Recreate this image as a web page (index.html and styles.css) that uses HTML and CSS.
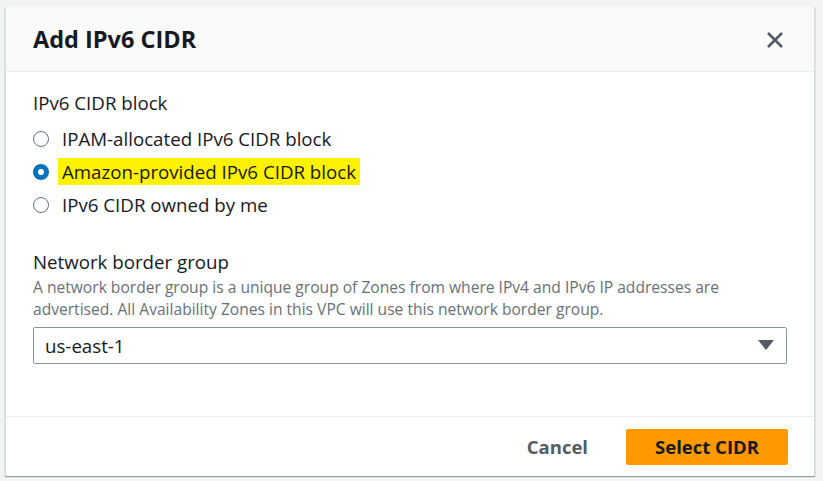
FILE: index.html
```html
<!DOCTYPE html>
<html lang="en">
<head>
<meta charset="utf-8">
<title>Add IPv6 CIDR</title>
<link rel="stylesheet" href="styles.css">
</head>
<body>
<div class="backdrop">
  <div class="modal">
    <div class="modal-header">
      <h2 class="title">Add IPv6 CIDR</h2>
      <button class="close" aria-label="Close">
        <svg width="18" height="18" viewBox="0 0 18 18"><path d="M2 2L16 16M16 2L2 16" stroke="#545b64" stroke-width="2.6" fill="none"/></svg>
      </button>
    </div>
    <div class="modal-body">
      <div class="field-label">IPv6 CIDR block</div>
      <div class="radios">
        <label class="radio"><span class="dot"></span><span class="radio-text">IPAM-allocated IPv6 CIDR block</span></label>
        <label class="radio"><span class="dot checked"></span><span class="radio-text highlight">Amazon-provided IPv6 CIDR block</span></label>
        <label class="radio"><span class="dot"></span><span class="radio-text">IPv6 CIDR owned by me</span></label>
      </div>
      <div class="field group">
        <div class="field-label">Network border group</div>
        <div class="desc">A network border group is a unique group of Zones from where IPv4 and IPv6 IP addresses are advertised. All Availability Zones in this VPC will use this network border group.</div>
        <div class="select">
          <span>us-east-1</span>
          <svg width="16" height="11" viewBox="0 0 16 11"><path d="M0 0H16L8 10Z" fill="#545b64"/></svg>
        </div>
      </div>
    </div>
    <div class="modal-footer">
      <button class="btn-link">Cancel</button>
      <button class="btn-primary">Select CIDR</button>
    </div>
  </div>
</div>
</body>
</html>
```
FILE: styles.css
```css
html, body {
  margin: 0;
  padding: 0;
  background: #f2f3f3;
  font-family: "Open Sans", "Noto Sans", sans-serif;
  color: #16191f;
}
.backdrop {
  width: 823px;
  height: 481px;
  padding: 7px 0 0 5px;
  box-sizing: border-box;
}
.modal {
  width: 810px;
  height: 469px;
  background: #fff;
  border-left: 1px solid #d5dbdb;
  border-right: 1px solid #d5dbdb;
  box-sizing: border-box;
  box-shadow: 0 1px 1px rgba(0,28,36,0.4);
  display: flex;
  flex-direction: column;
}
.modal-header {
  height: 65px;
  box-sizing: border-box;
  background: #fafafa;
  border-bottom: 1px solid #eaeded;
  display: flex;
  align-items: center;
  justify-content: space-between;
  padding: 0 30px 0 27px;
}
.title {
  margin: 0;
  font-size: 23.5px;
  font-weight: 700;
  color: #16191f;
}
.close {
  background: none;
  border: 0;
  padding: 0;
  display: flex;
  margin-top: 2px;
}
.modal-body {
  flex: 1;
  padding: 18px 27px 0 27px;
  border-bottom: 1px solid #eaeded;
}
.field-label {
  font-size: 18.7px;
  line-height: 26px;
  color: #16191f;
}
.radios {
  display: flex;
  flex-direction: column;
  margin-top: 6px;
}
.radio {
  display: flex;
  align-items: center;
  height: 33px;
}
.dot {
  width: 16px;
  height: 16px;
  border: 1.5px solid #687078;
  border-radius: 50%;
  box-sizing: border-box;
  margin-left: 0;
  margin-right: 13px;
  flex: none;
}
.dot.checked {
  border: 5px solid #0073bb;
  background: #fff;
}
.radio-text {
  font-size: 18.7px;
  line-height: 27px;
  padding: 0 4px;
  margin-left: -4px;
}
.highlight {
  background: #fff200;
}
.group {
  margin-top: 28px;
}
.desc {
  max-width: 735px;
  margin-top: 1px;
  font-size: 15.6px;
  line-height: 22px;
  color: #687078;
}
.select {
  margin-top: 7px;
  height: 37px;
  box-sizing: border-box;
  border: 1px solid #879596;
  border-radius: 2px;
  display: flex;
  align-items: center;
  justify-content: space-between;
  padding: 0 12px 0 11px;
  font-size: 18.7px;
}
.modal-footer {
  height: 59px;
  display: flex;
  align-items: center;
  justify-content: flex-end;
  padding: 0 26px 0 0;
  gap: 12px;
  box-sizing: border-box;
}
.btn-link {
  background: none;
  border: 0;
  font-family: inherit;
  font-size: 18.5px;
  font-weight: 700;
  color: #545b64;
  padding: 0 26px;
  height: 36px;
}
.btn-primary {
  background: #ff9900;
  border: 0;
  border-radius: 2px;
  font-family: inherit;
  font-size: 18.5px;
  font-weight: 700;
  color: #16191f;
  width: 162px;
  height: 36px;
}
```
